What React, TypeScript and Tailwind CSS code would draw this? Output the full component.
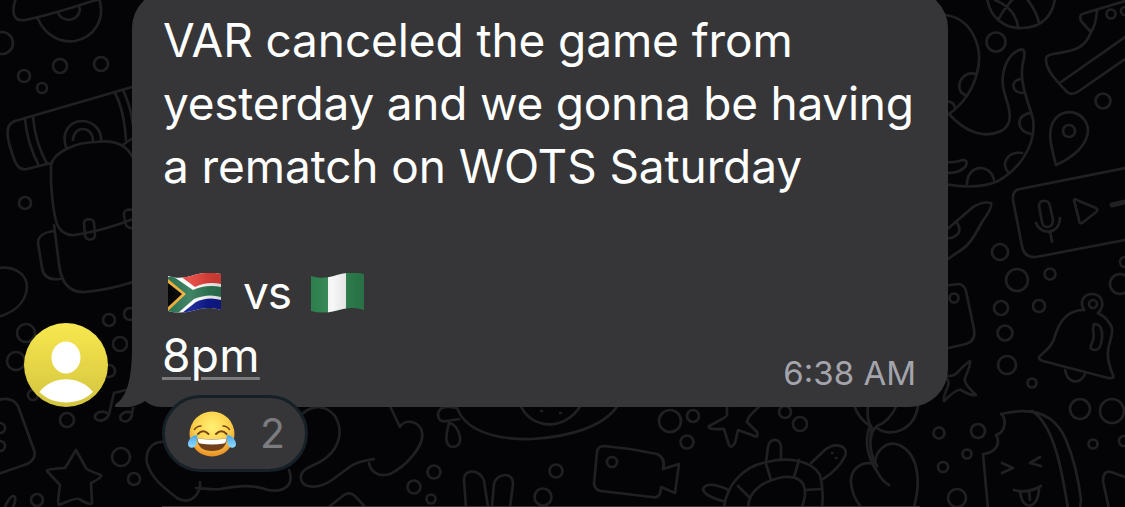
const circles = [
  [2, 43, 11], [60, 66, 7], [101, 64, 7], [24, 76, 6], [42, 88, 5], [25, 203, 6],
  [26, 333, 9], [16, 361, 9], [109, 320, 6], [120, 344, 7], [109, 371, 6], [130, 314, 6], [33, 395, 5],
  [67, 420, 7], [121, 457, 9], [134, 479, 6], [37, 500, 6], [0, 428, 5], [0, 446, 5],
  [434, 472, 6.5], [414, 487, 6.5], [431, 499, 4.5], [556, 471, 6.5], [543, 497, 8.5], [612, 462, 5],
  [670, 421, 11], [693, 416, 6], [687, 442, 6.5], [785, 412, 6], [800, 424, 7],
  [939, 433, 5.5], [943, 467, 5], [957, 498, 9],
  [996, 42, 9.5], [1103, 101, 7.5], [1069, 131, 6], [1111, 14, 4.5], [1125, 11, 4],
  [1000, 252, 8], [1017, 280, 11], [1050, 274, 5.5], [1001, 308, 7], [1039, 306, 6], [1005, 333, 7.5],
  [1007, 365, 9], [1032, 383, 4.5], [954, 298, 4.5], [978, 431, 7], [967, 454, 4.5],
  [1080, 409, 10], [1112, 411, 12], [1093, 444, 4.5], [1124, 441, 5], [1120, 284, 10],
  [1125, 262, 5], [1093, 304, 4],
];

const doodles = [
  // planet
  "M16 -2 C11 12 13 22 25 20 C55 14 78 5 100 -1 M38 19 C46 37 62 43 75 41 C94 37 106 20 99 -2 M58 13 C62 22 77 23 80 10 L79 6",
  // camera roll and backpack
  "M15 121 L132 87 M15 121 C2 125 9 145 14 159 Q18 171 27 169 L51 163 M25 119 Q27 143 39 166 M33 117 Q35 142 47 164",
  "M115 93 Q124 110 126 140 M123 90 Q131 107 133 125 M66 147 C61 132 70 121 82 121 C94 121 102 131 101 141 M73 140 C73 133 78 129 83 129 C89 129 93 134 93 141",
  "M133 158 C126 143 112 140 96 142 C78 142 54 151 51 165 C50 190 54 215 57 224 Q62 236 75 235 Q106 230 133 219 M124 144 L133 138",
  "M84 223 C84 218 94 218 94 223 L95 235 C95 241 85 241 85 235 Z M133 210 Q123 208 124 216 L126 225 Q129 229 133 228",
  "M54 231 Q38 233 38 243 L42 268 Q44 281 60 279 M54 225 L59 264 Q62 293 85 292 Q108 290 133 282",
  // pebble, note, card
  "M-2 268 C16 266 27 275 27 287 C26 304 12 313 -2 317",
  "M-2 400 Q12 396 18 406 L34 450 Q37 459 27 464 L-2 474",
  "M109 414 C102 409 94 413 95 418 C99 423 107 420 109 414 L114 393 L138 387 L132 413 C126 410 118 414 121 420 C127 424 132 419 132 413",
  "M76 450 L86 468 Q87 470 101 475 Q103 477 91 483 L92 503 Q91 506 79 499 Q77 497 59 505 Q57 505 60 485 L47 471 Q46 469 65 468 Z",
  "M5 507 Q11 493 15 497 Q16 502 13 507",
  // bone and dog
  "M164 442 C151 441 145 452 147 463 C151 478 164 488 177 498 Q189 505 197 494 Q201 488 200 482 M196 488 C204 488 210 490 220 489 C237 486 252 484 268 490 C287 493 294 483 289 470",
  "M302 414 C313 404 326 405 335 416 C344 431 339 447 327 457 C316 467 299 467 301 479 C303 489 319 489 332 480 L351 466 Q356 462 374 459 M390 406 L400 427 C404 419 419 420 422 432 C425 446 405 467 390 474 C377 478 370 470 369 463",
  "M330 506 L344 495 Q350 491 356 497 L365 507",
  // bowl
  "M456 404 C462 430 494 440 532 439 C570 437 605 426 618 405 M520 404 C530 430 565 432 581 405 M456 408 Q440 404 438 414 Q438 423 447 421 L459 419 M449 423 C446 435 444 445 452 447 Q461 447 460 437 Q457 424 449 423",
  "M541 411 h1 M560 413 h1 M549 406 h1",
  "M466 507 L464 480 C463 468 481 469 484 481 L488 507 M492 507 L494 484 C497 472 514 472 513 484 L510 507",
  // video camera
  "M630 449 L604 446 Q598 446 597 452 L594 484 Q595 490 601 491 L652 497 Q661 499 661 487 L675 493 L679 464 L663 469 Q666 458 657 454 L630 449",
  // starfish
  "M727 405 L727 415 Q727 417 709 426 Q707 430 724 429 L729 445 Q731 449 735 443 L738 430 L752 435 Q759 439 757 432 L747 422 Q747 417 760 406",
  // turtle
  "M724 507 C727 484 744 466 767 462 C787 457 812 460 820 475 Q824 490 822 507 M748 507 C749 489 766 480 784 477 C804 475 809 488 802 507",
  "M766 464 L771 480 M738 486 L749 497 M799 460 L794 477 M805 490 L821 489 M766 462 L768 447 C770 436 781 439 781 447 L781 459 M729 490 Q707 480 703 489 Q704 496 723 501 M811 463 L826 449 C836 442 849 446 845 456 Q839 469 823 479",
  "M832 453 h.5 M836 458 h.5",
  // cherries
  "M854 405 Q858 418 870 426 C864 440 867 457 878 473 Q882 481 889 485 M868 405 Q866 420 872 428 C868 445 871 456 877 466 M897 405 Q889 422 877 426 Q872 430 871 438 M877 428 C890 438 915 431 918 405",
  "M874 464 C860 460 850 471 851 483 Q852 496 861 507 M875 463 C876 450 887 440 899 445 C919 454 921 482 914 507",
  // ball
  "M987 -2 C990 20 1008 29 1022 28 C1043 28 1053 14 1055 -2 M995 0 Q1016 9 1018 27 M998 20 Q1005 7 1014 -2 M1027 -1 Q1037 12 1039 23",
  // tentacle
  "M945 15 C972 18 984 48 977 73 C972 93 960 106 949 114 C965 132 984 139 1001 131 C1015 124 1009 107 1005 95 C999 77 1005 56 1019 50 Q1026 47 1024 58 C1017 80 1029 103 1033 119 C1037 148 1016 171 998 181 C980 189 960 187 944 184",
  "M976 74 C966 71 957 80 960 90 Q961 93 965 95 M1021 79 C1010 80 1011 93 1023 93 M1031 113 C1016 114 1015 131 1031 134 M1022 153 C1007 151 1001 164 1008 172 M994 180 C990 162 967 165 967 184 M944 103 Q952 99 955 107",
  "M944 162 Q954 163 963 160 Q969 160 965 167 Q957 175 944 172",
  // boot
  "M1125 1 L1082 14 Q1079 16 1081 21 L1091 32 Q1096 25 1097 10 M1091 32 C1085 49 1073 51 1053 54 Q1045 55 1046 61 C1048 74 1059 83 1067 92 Q1072 96 1079 91 L1125 59 M1061 82 L1125 37",
  // pin
  "M1056 165 C1050 143 1047 130 1055 119 C1067 105 1088 114 1088 131 C1087 145 1074 157 1056 165 Z",
  // voice message
  "M1125 168 L1020 189 Q1012 190 1013 200 L1022 246 Q1024 258 1036 257 L1125 240 M1074 200 Q1075 198 1079 201 L1096 208 Q1099 210 1095 213 L1082 223 Q1079 224 1079 220 Z",
  "M1039 206 C1039 199 1049 199 1050 206 L1053 220 C1053 229 1043 229 1042 222 Z M1036 223 C1041 236 1060 234 1060 218 M1050 231 L1052 242",
  // feather
  "M944 232 L973 207 Q983 201 991 203 Q993 207 982 222 C974 237 969 246 958 252 L948 259 M957 223 C964 233 954 239 946 238",
  // playing card and sparkle
  "M944 286 L958 284 Q964 284 966 291 L974 329 Q976 341 966 344 L944 349",
  "M970 361 Q971 364 965 378 Q963 383 976 395 Q971 396 961 390 Q957 388 944 401 Q942 400 948 386 Q950 381 944 376 Q952 377 957 373 Q964 365 970 361 Z",
  // bell
  "M1084 310 C1068 310 1060 321 1056 333 C1052 349 1043 352 1039 357 Q1038 359 1043 361 L1108 378 Q1115 379 1113 375 C1101 347 1114 341 1112 328 Q1108 318 1098 313 M1065 370 C1068 385 1081 384 1085 374",
  "M1084 310 C1079 301 1084 294 1092 294 C1102 294 1106 305 1098 313",
  "M1094 324 Q1103 324 1102 338 Q1101 349 1096 350 Q1089 350 1091 345 Q1095 339 1093 329 Z",
  // popsicle
  "M988 509 L983 454 C996 453 1001 443 996 435 C1007 432 1006 416 1001 414 C1038 405 1057 418 1066 440 Q1077 466 1081 500 L1080 509 M1032 411 C1055 425 1063 477 1068 509",
  "M1002 463 L1013 468 L1002 473 M1040 457 L1030 463 L1041 466 M1014 490 Q1027 494 1041 486 M1020 492 C1023 513 1039 508 1039 488 M1029 492 L1030 500",
  "M1109 509 L1103 481 Q1103 470 1111 472 L1125 477",
];

function Wallpaper() {
  return (
    <svg
      className="absolute inset-0"
      width="1125"
      height="507"
      viewBox="0 0 1125 507"
      fill="none"
      stroke="#202022"
      strokeWidth="2.7"
      strokeLinecap="round"
      strokeLinejoin="round"
    >
      {doodles.map((d) => (
        <path key={d} d={d} />
      ))}
      <path d="M1112 205 L1125 202" strokeWidth="5" />
      {circles.map(([x, y, r], i) => (
        <circle key={i} cx={x} cy={y} r={r} />
      ))}
    </svg>
  );
}

function Avatar() {
  return (
    <svg className="mb-[100px] ml-6 size-[84px] shrink-0 self-end" viewBox="0 0 84 84">
      <defs>
        <linearGradient id="avatar" x1="0" y1="0" x2="0" y2="1">
          <stop offset="0" stopColor="#f8e84e" />
          <stop offset="1" stopColor="#d3c33f" />
        </linearGradient>
      </defs>
      <circle cx="42" cy="42" r="42" fill="url(#avatar)" />
      <ellipse cx="42" cy="34.5" rx="14.5" ry="16" fill="#fff" />
      <path d="M15.5 69 C28 52 56 52 69 69 C55 83 29 83 15.5 69 Z" fill="#fff" />
    </svg>
  );
}

function SouthAfricaFlag() {
  return (
    <svg className="h-[40px] w-[53px]" viewBox="0 0 53 40">
      <defs>
        <clipPath id="za">
          <path d="M0 3 C9 6 17 5 26 2 Q40 -2 53 1 V37 C40 33 32 36 24 38 Q11 41 0 38 Z" />
        </clipPath>
        <linearGradient id="wave">
          <stop offset="0" stopColor="#000" stopOpacity="0.05" />
          <stop offset="0.4" stopColor="#fff" stopOpacity="0.08" />
          <stop offset="0.75" stopColor="#000" stopOpacity="0.1" />
          <stop offset="1" stopColor="#000" stopOpacity="0.16" />
        </linearGradient>
      </defs>
      <g clipPath="url(#za)">
        <path d="M0 0 H53 V40 H0 Z" fill="#fff" />
        <path d="M8 0 H53 V11 Q39 8 27 14 Z" fill="#e5433b" />
        <path d="M14 40 L28 29 Q40 23 53 27 V40 Z" fill="#101b91" />
        <path d="M0 4 L6 4 L25 17 Q38 11 53 14 V24 Q40 20 26 26 L10 40 H0 Z" fill="#317a59" />
        <path d="M0 6 L18 21 L0 38 Z" fill="#f5b53d" />
        <path d="M0 10 L14 21 L0 34 Z" fill="#050505" />
        <path d="M0 0 H53 V40 H0 Z" fill="url(#wave)" />
      </g>
    </svg>
  );
}

function NigeriaFlag() {
  return (
    <svg className="h-[40px] w-[53px]" viewBox="0 0 53 40">
      <defs>
        <clipPath id="ng">
          <path d="M0 3 C9 6 17 5 26 2 Q40 -2 53 1 V37 C40 33 32 36 24 38 Q11 41 0 38 Z" />
        </clipPath>
      </defs>
      <g clipPath="url(#ng)">
        <path d="M0 0 H53 V40 H0 Z" fill="#2f8551" />
        <path d="M17 0 H35 V40 H17 Z" fill="#f6f6f6" />
        <path d="M0 0 H53 V40 H0 Z" fill="url(#wave)" />
      </g>
    </svg>
  );
}

function JoyEmoji() {
  return (
    <svg className="h-[46px] w-[50px]" viewBox="0 0 50 46">
      <defs>
        <radialGradient id="face" cx="0.5" cy="0.35" r="0.65">
          <stop offset="0" stopColor="#fff176" />
          <stop offset="0.6" stopColor="#fdd04a" />
          <stop offset="1" stopColor="#e88d25" />
        </radialGradient>
        <linearGradient id="tear" x1="0" y1="0" x2="0" y2="1">
          <stop offset="0" stopColor="#4aa6ee" />
          <stop offset="1" stopColor="#8fdcff" />
        </linearGradient>
      </defs>
      <circle cx="25" cy="23" r="22.5" fill="url(#face)" />
      <g fill="none" stroke="#79431a" strokeLinecap="round">
        <path d="M7.500 18.500 Q10 15 14 15 M36 15 Q40 15 42.500 18.500" strokeWidth="1.500" />
        <path d="M11 23 Q16 17.500 21.500 23 M29 23 Q34.500 17.500 39.500 23" strokeWidth="2" />
      </g>
      <path d="M10 27.500 Q25 29 40 27.500 Q39 40 25 40 Q11 40 10 27.500 Z" fill="#71401b" />
      <path d="M10.500 27.500 Q25 29.500 39.500 27.500 Q39 32 37 32.500 Q25 34.500 13 32.500 Q11 32 10.500 27.500 Z" fill="#fff" />
      <path d="M10.500 24 C5 24 1 29 1 33 C1 38 8 38 9.500 33 Z M39.500 24 C45 24 49 29 49 33 C49 38 42 38 40.500 33 Z" fill="url(#tear)" />
    </svg>
  );
}

function Reaction() {
  return (
    <div className="absolute top-[395px] left-[162px] flex h-[77px] w-[146px] items-center rounded-full border-3 border-[#162027] bg-[#363638] pl-[22px]">
      <JoyEmoji />
      <span className="ml-[23px] text-[41px] leading-none text-[#7c7c80]">2</span>
    </div>
  );
}

function Bubble() {
  return (
    <div className="relative mt-[-10px] ml-6 flex h-[417px] w-[816px] flex-col rounded-[38px] rounded-bl-none bg-[#363638] pt-[19px] pl-[31px] text-[46px] leading-[63px] whitespace-nowrap text-white">
      {/* the bubble's own corner is square, the notch is cut out of it in the wallpaper colour */}
      <svg className="absolute bottom-0 -left-[18px] h-[60px] w-[48px]" viewBox="0 0 48 60">
        <path d="M18 0 C18 35 12 50 2 57 Q-1 60 3 60 H19 V0 Z" fill="#363638" />
        <path d="M16 60 Q25 58 31 54 Q38 60 48 60 Z" fill="#040406" />
      </svg>
      <p className="tracking-[-0.1px]">VAR canceled the game from</p>
      <p className="tracking-[-0.24px]">yesterday and we gonna be having</p>
      <p className="tracking-[-0.1px]">a rematch on WOTS Saturday</p>
      <div className="mt-[63px] flex h-[63px] items-center pl-[5px]">
        <SouthAfricaFlag />
        <span className="ml-[22px] w-[68px] tracking-[-1px]">vs</span>
        <NigeriaFlag />
      </div>
      <p className="-ml-px">
        <span className="tracking-[0.3px] underline decoration-[#7c7c7e] decoration-3 underline-offset-[5px]">8pm</span>
      </p>
      <time className="absolute right-[32px] bottom-[18px] text-[33px] leading-[32px] text-[#a4a4ac]">6:38 AM</time>
    </div>
  );
}

export default function App() {
  return (
    <main className="relative flex h-[507px] w-[1125px] overflow-hidden bg-[#040406] font-[Inter,sans-serif]">
      <Wallpaper />
      <div className="relative flex">
        <Avatar />
        <Bubble />
      </div>
      <Reaction />
      <div className="absolute bottom-0 left-[162px] h-px w-[758px] bg-[#363638]" />
    </main>
  );
}
